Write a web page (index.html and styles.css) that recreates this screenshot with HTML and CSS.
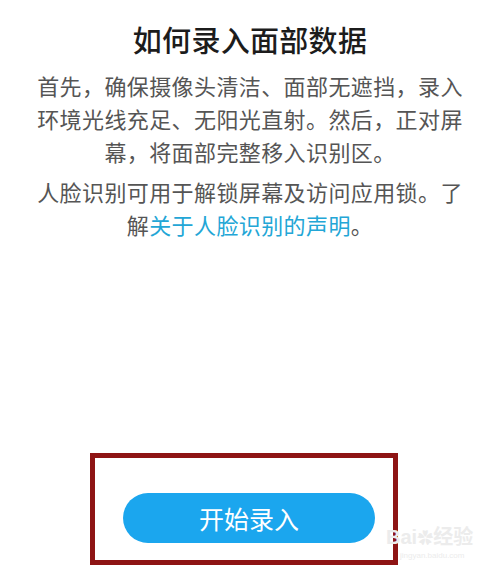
FILE: index.html
```html
<!DOCTYPE html>
<html lang="zh-CN">
<head>
<meta charset="utf-8">
<link rel="stylesheet" href="styles.css">
</head>
<body>
<div class="page">
  <h1 class="title">如何录入面部数据</h1>
  <p class="para">首先，确保摄像头清洁、面部无遮挡，录入环境光线充足、无阳光直射。然后，正对屏幕，将面部完整移入识别区。</p>
  <p class="para second">人脸识别可用于解锁屏幕及访问应用锁。了解<span class="link">关于人脸识别的声明</span>。</p>
  <div class="spacer"></div>
  <div class="highlight">
    <div class="button">开始录入</div>
  </div>
  <div class="watermark"><span class="wm-main">Bai<span class="paw">✿</span>经验</span><span class="wm-sub">jingyan.baidu.com</span></div>
</div>
</body>
</html>
```
FILE: styles.css
```css
html, body {
  margin: 0;
  padding: 0;
  background: #ffffff;
}
.page {
  position: relative;
  width: 500px;
  height: 577px;
  display: flex;
  flex-direction: column;
  align-items: center;
  font-family: "Noto Sans CJK SC", "Noto Sans", sans-serif;
  overflow: hidden;
}
.title {
  margin: 17px 0 0 0;
  font-size: 29px;
  line-height: 44px;
  font-weight: 500;
  color: #1c1c1c;
  letter-spacing: 0.3px;
}
.para {
  margin: 8px 0 0 0;
  width: 430px;
  text-align: center;
  font-size: 22px;
  letter-spacing: 0.4px;
  line-height: 33px;
  color: #555555;
}
.para.second {
  margin-top: 7px;
}
.link {
  color: #23a6d6;
}
.spacer {
  flex: 1;
}
.highlight {
  align-self: flex-start;
  margin: 0 0 12px 90px;
  width: 308px;
  height: 112px;
  box-sizing: border-box;
  border: 5px solid #8e1414;
  padding: 35px 0 0 28px;
}
.button {
  width: 252px;
  height: 50px;
  border-radius: 25px;
  background: #1ba6ee;
  color: #ffffff;
  font-size: 25px;
  line-height: 50px;
  text-align: center;
}
.watermark {
  position: absolute;
  left: 386px;
  top: 526px;
  display: flex;
  flex-direction: column;
  color: #ececec;
  font-family: "Liberation Sans", "Noto Sans CJK SC", sans-serif;
}
.wm-main {
  font-size: 20px;
  line-height: 22px;
  font-weight: bold;
}
.paw {
  font-size: 16px;
}
.wm-sub {
  font-size: 8px;
  line-height: 11px;
  margin-left: 14px;
}
```
